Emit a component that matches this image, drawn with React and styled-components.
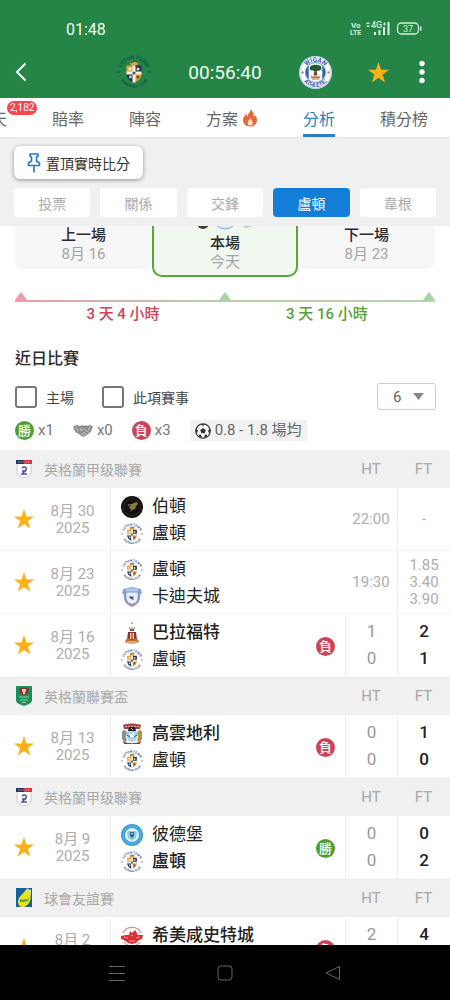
import React, { useId } from 'react';
import styled, { createGlobalStyle } from 'styled-components';

const GlobalStyle = createGlobalStyle`
    * {
        box-sizing: border-box;
    }

    body {
        margin: 0;
        background: #fff;
        color: #2b2b2b;
        font-family: Roboto, "Noto Sans CJK TC", sans-serif;
        font-size: 15px;
    }

    button, select {
        font: inherit;
        color: inherit;
        border: 0;
        padding: 0;
        background: none;
    }
`;

/* ---------- crests ---------- */

function LutonCrest({ size, dark }) {
    const id = useId();
    const ink = dark ? '#14504a' : '#3c4f7c';
    return (
        <svg width={size} height={size} viewBox="0 0 34 34" aria-hidden="true">
            <path id={id + 't'} d="M4.500 13 A13.2 13.2 0 0 1 29.500 13" fill="none"/>
            <path id={id + 'b'} d="M1.500 21 A16.2 16.2 0 0 0 32.500 21" fill="none"/>
            <text fontSize="5" fontWeight="700" fill={ink} textAnchor="middle">
                <textPath href={`#${id}t`} startOffset="50%">LUTON TOWN</textPath>
            </text>
            <text fontSize="4.2" fontWeight="700" fill={ink} textAnchor="middle">
                <textPath href={`#${id}b`} startOffset="50%">FOOTBALL CLUB</textPath>
            </text>
            <path d="M0 17h3M31 17h3" stroke={ink} strokeWidth="1"/>
            <path d="M13 8.500c2-3 6-3 8 0l-1 2h-6z" fill="#d9a441"/>
            <path d="M14 8l3-2 4 1" stroke={ink} strokeWidth="1" fill="none"/>
            <path d="M9.500 10.500h7.500v7.500h-7.500z" fill="#e3a33b"/>
            <path d="M17 10.500h7.500v7.500h-7.500z" fill="#26334f"/>
            <path d="M9.500 18h7.500v9.500c-4-1-7.500-4-7.500-9.500z" fill="#26334f"/>
            <path d="M17 18h7.500c0 5.500-3.500 8.500-7.500 9.500z" fill="#d99a3c"/>
            <path d="M15.500 10.500h3v17h-3zM9.500 16.500h15v3h-15z" fill="#f4f1e8"/>
            <circle cx="13" cy="14" r="1.500" fill="#fff"/>
            <circle cx="21" cy="14" r="1.500" fill="#e9d7a8"/>
            <circle cx="13.400" cy="22" r="1.400" fill="#c9ced9"/>
            <circle cx="20.800" cy="22" r="1.400" fill="#7b4a1c"/>
            <circle cx="17" cy="18" r="1.600" fill="#555"/>
        </svg>
    );
}

function WiganCrest({ size }) {
    const id = useId();
    return (
        <svg width={size} height={size} viewBox="0 0 34 34" aria-hidden="true">
            <path id={id + 't'} d="M6 15 A11.2 11.2 0 0 1 28 15" fill="none"/>
            <path id={id + 'b'} d="M1.800 20 A15.6 15.6 0 0 0 32.200 20" fill="none"/>
            <circle cx="17" cy="17" r="17" fill="#f7f9fc"/>
            <circle cx="17" cy="17" r="16.400" fill="none" stroke="#7fa6d6" strokeWidth=".6"/>
            <circle cx="17" cy="17" r="10.300" fill="#fff" stroke="#3a6fc0" strokeWidth=".8"/>
            <path d="M10 9.800a10 10 0 0 0 0 14.400zM24 9.800a10 10 0 0 1 0 14.400z" fill="#2a61b8"/>
            <text fontSize="6.600" fontWeight="700" fill="#3561b4" textAnchor="middle">
                <textPath href={`#${id}t`} startOffset="50%">WIGAN</textPath>
            </text>
            <text fontSize="6" fontWeight="700" fill="#3561b4" textAnchor="middle">
                <textPath href={`#${id}b`} startOffset="50%">ATHLETIC</textPath>
            </text>
            <path d="M11 13c0-3 3-4 6-4s7 1 6 4c0 2-3 2.500-6 2.500S11 15 11 13z" fill="#1f5b3a"/>
            <path d="M16 14h2l1 6h-4z" fill="#6b4a2c"/>
            <path d="M12 19l2 2 3-1 3 1 2-2v4l-2 2h-6l-2-2z" fill="#e0b48a"/>
            <path d="M13 22h8" stroke="#9c5b3a" strokeWidth="1"/>
            <circle cx="3.500" cy="17" r="1.300" fill="#c08a5a"/>
            <circle cx="30.500" cy="17" r="1.300" fill="#c08a5a"/>
        </svg>
    );
}

function BurtonCrest() {
    return (
        <svg width="22" height="22" viewBox="0 0 22 22" aria-hidden="true">
            <circle cx="11" cy="11" r="11" fill="#141210"/>
            <circle cx="11" cy="11" r="8.500" fill="none" stroke="#4b422c" strokeWidth=".8" strokeDasharray="1.500 1"/>
            <path d="M16 6l-3 1-2 1-3 0 2 2-2 2 2 1-1 3 2-2 3-1 1-3 2-2z" fill="#8f7a45"/>
            <path d="M7 8l2 3" stroke="#b59d5e" strokeWidth=".8"/>
        </svg>
    );
}

function CardiffCrest() {
    return (
        <svg width="22" height="22" viewBox="0 0 22 22" aria-hidden="true">
            <path d="M2 3l4-1 5-1 5 1 4 1 1 4-2 2c1 5-2 10-8 12C5 19 2 14 3 9L1 7z" fill="#8ea4d6"/>
            <path d="M5 6h12c1 6 0 11-6 13.500C5 17 4 12 5 6z" fill="#e9effb" stroke="#5a76bd" strokeWidth=".8"/>
            <path d="M5 2.500h12v3H5z" fill="#b7c6ea"/>
            <path d="M8 11l2-1 1 1 2-1-1 2 1 2-3-1z" fill="#31549c"/>
            <path d="M8 17l3 2 3-2" stroke="#d8728c" strokeWidth="1.200" fill="none"/>
        </svg>
    );
}

function BradfordCrest() {
    return (
        <svg width="22" height="22" viewBox="0 0 22 22" aria-hidden="true">
            <path d="M11 0l1 1.500-1 1-1-1z" fill="#6fa35a"/>
            <path d="M8 4l2 4 1-2 1 2 2-4-1 5H9z" fill="#4e4a48"/>
            <path d="M10 5h2v2h-2z" fill="#eab04e"/>
            <path d="M7 10h8l1 8H6z" fill="#8e2f2a"/>
            <path d="M9 11h4v6H9z" fill="#e8c6a0"/>
            <path d="M10.500 11h1v6h-1z" fill="#8e2f2a"/>
            <path d="M5 18c1-2 3-2 4-1l2 1 2-1c1-1 3-1 4 1l1 2c-4 2-10 2-14 0z" fill="#c4692f"/>
            <path d="M6 20h10" stroke="#f5e4cf" strokeWidth="1"/>
        </svg>
    );
}

function CoventryCrest() {
    return (
        <svg width="22" height="22" viewBox="0 0 22 22" aria-hidden="true">
            <path d="M2 2c5-2 13-2 18 0l-1 4H3z" fill="#a14848"/>
            <path d="M4 3.500h14" stroke="#d9a9a9" strokeWidth="1" strokeDasharray="2 1"/>
            <path d="M8 4h6l1 4H7z" fill="#222"/>
            <path d="M10 5l2 2" stroke="#e8c04e" strokeWidth="1"/>
            <path d="M6 8h10v6c0 3-2 4-5 5-3-1-5-2-5-5z" fill="#a9d4ef"/>
            <path d="M9 10h4v4H9z" fill="#fff"/>
            <path d="M1 8l3-1 2 3-1 4 1 4-3 1-2-3z" fill="#8b8f95"/>
            <path d="M21 8l-3-1-2 3 1 4-1 4 3 1 2-3z" fill="#b8913f"/>
            <path d="M2 18c5 3 13 3 18 0l-1 3H3z" fill="#9b3b3b"/>
            <path d="M6 12l3 2M16 12l-3 2" stroke="#33527f" strokeWidth="1"/>
        </svg>
    );
}

function PeterboroughCrest() {
    return (
        <svg width="22" height="22" viewBox="0 0 22 22" aria-hidden="true">
            <circle cx="11" cy="11" r="11" fill="#3a9fd0"/>
            <circle cx="11" cy="11" r="8.800" fill="none" stroke="#8fcbe6" strokeWidth="1" strokeDasharray="1.500 1"/>
            <circle cx="11" cy="11" r="7" fill="#e6f5fb"/>
            <path d="M7 7h8l1 2-1 5-4 3-4-3-1-5z" fill="#8fcde8"/>
            <path d="M9 8h4v4l-2 2-2-2z" fill="#276c9c"/>
            <path d="M10 9.500h2" stroke="#fff" strokeWidth=".8"/>
        </svg>
    );
}

function HemelCrest() {
    return (
        <svg width="22" height="22" viewBox="0 0 22 22" aria-hidden="true">
            <path d="M2 8a10 10 0 0 1 18 0" fill="none" stroke="#e58b8d" strokeWidth="1.200"/>
            <path d="M0 11l5-1 3 0 1-4 2 2 3-3 2 3 0 2 6 0-1 4-3 1-3 3-4 1-4-1-4-3-3-1z" fill="#dc2f35"/>
            <path d="M3 12l4 1M15 13l4-1M10 10l2 1M8 16h6" stroke="#f7b9ba" strokeWidth=".8"/>
            <path d="M3 17a10 10 0 0 0 16 0" fill="none" stroke="#e58b8d" strokeWidth="1.200"/>
        </svg>
    );
}

const crests = {
    luton: () => <LutonCrest size={22}/>,
    burton: BurtonCrest,
    cardiff: CardiffCrest,
    bradford: BradfordCrest,
    coventry: CoventryCrest,
    peterborough: PeterboroughCrest,
    hemel: HemelCrest,
};

function LeagueIcon({ kind }) {
    if (kind === 'cup') {
        return (
            <svg width="18" height="20" viewBox="0 0 18 20" aria-hidden="true">
                <path d="M1 0h16v14c0 3-3 4-8 6-5-2-8-3-8-6z" fill="#1c9058"/>
                <path d="M4 3c3-2 7-2 10 0l-1 4-3 2H8L5 7z" fill="#8d2f2a"/>
                <path d="M7 3h4l-1 5H8z" fill="#f0d2c8"/>
                <path d="M4 11h10M5 14h8M7 16.500h4" stroke="#8fd0b0" strokeWidth="1"/>
            </svg>
        );
    }
    if (kind === 'friendly') {
        return (
            <svg width="18" height="20" viewBox="0 0 18 20" aria-hidden="true">
                <path d="M1 0h16v19H1z" fill="#1a5f9e"/>
                <path d="M12 0c4 3 6 14-1 18-4 3-8 0-8-4 0-6 6-8 9-14z" fill="#e6e31a"/>
                <path d="M5 11c3 1 6 1 9-1l-1 3c-3 1-5 1-8 1z" fill="#57a04e"/>
                <path d="M13 1l3 1v6z" fill="#cfe0ea"/>
            </svg>
        );
    }
    return (
        <svg width="18" height="20" viewBox="0 0 18 20" aria-hidden="true">
            <path d="M2 4h14v9c0 3-3 5-7 6-4-1-7-3-7-6z" fill="#fff" stroke="#c7c9dc" strokeWidth="1"/>
            <path d="M1 1h8v4H1z" fill="#27345f"/>
            <path d="M9 1h8v4H9z" fill="#d8323f"/>
            <path d="M3 3h12" stroke="#d5d2dd" strokeWidth=".7" strokeDasharray="1.500 1"/>
            <path d="M7 9c2-2 5-1 4 2l-4 4h5M7 12h4" stroke="#4a4e9c" strokeWidth="1.500" fill="none"/>
        </svg>
    );
}

/* ---------- small icons ---------- */

function Star({ size }) {
    return (
        <svg width={size} height={size} viewBox="0 0 24 24" aria-hidden="true">
            <path d="M12 1.200l2.700 8h8.300l-6.700 5 2.500 8.200L12 17.400l-6.800 5 2.500-8.200-6.700-5h8.300z" fill="#fdb017"/>
        </svg>
    );
}

function Flame() {
    return (
        <svg width="16" height="18" viewBox="0 0 16 18" aria-hidden="true">
            <path d="M8.500 0c.8 3-3 4.500-2.600 7.500C4.700 7 4.500 6 4.600 4.800 2.500 6.500 1 8.800 1 11.300 1 15 4 17.500 8 17.500s7-2.500 7-6.200c0-2.300-1-4-2.300-5.600 0 1-.3 1.800-1 2.300C12 5 10.800 2 8.500 0z" fill="#e8663c"/>
            <path d="M8.300 8.500c.3 2-2.500 2.900-2.500 5.400 0 1.600 1 2.600 2.400 2.600s2.500-1 2.500-2.600c0-2.100-1.500-3.300-2.400-5.400z" fill="#fbe0cf"/>
        </svg>
    );
}

function Pin() {
    return (
        <svg width="14" height="20" viewBox="0 0 14 20" fill="none" stroke="#2479c4" strokeWidth="1.600" strokeLinejoin="round" strokeLinecap="round" aria-hidden="true">
            <path d="M3 1h8v2l-1.500 1v4l3 2v2.500h-11V10l3-2V4L3 3zM7 12.500V19"/>
        </svg>
    );
}

function Handshake() {
    return (
        <svg width="20" height="14" viewBox="0 0 20 14" aria-hidden="true">
            <path d="M0 2.500L4 .8l2 1.200 3-.7 2 .4 2-.5 2 .8L16.500.8 20 2.500l-2.500 6-1.500.5c-.3 1.300-1.200 1.600-2 1.500-.4 1.200-1.300 1.600-2.200 1.300-.7 1.200-1.700 1.500-2.600.8L4 8.800 2.500 8.500z" fill="#8c8c8c"/>
            <path d="M8.500 3.500L7 6c1.500.8 2.800.2 3.800-1.200L16 8.600M10 8.300l3.400 2.300M8 9.500l3 2M3 2.500l2 5M17 2.500l-1.500 4" stroke="#e2e2e2" strokeWidth=".7" fill="none"/>
        </svg>
    );
}

function Ball() {
    return (
        <svg width="16" height="16" viewBox="0 0 16 16" aria-hidden="true">
            <circle cx="8" cy="8" r="7.200" fill="#fff" stroke="#333" strokeWidth="1.300"/>
            <path d="M8 5l2.800 2-1 3.300H6.200L5.200 7zM5.500 1.200h5L8 3zM.8 6l2.200 1.300L2 10.500.8 9zM15.200 6L13 7.300l1 3.200 1.200-1.500zM4 11.500h2L7 14.800l-3-1.300zM12 11.500h-2l-1 3.300 3-1.300z" fill="#333"/>
        </svg>
    );
}

function StatusIcons() {
    return (
        <svg width="72" height="16" viewBox="0 0 72 16" fill="#d5f0dc" aria-hidden="true">
            <text x="1" y="7" fontSize="8" fontWeight="700">Vo</text>
            <text x="0" y="14" fontSize="7" fontWeight="700">LTE</text>
            <path d="M16 3l2-2 2 2zM16 4.500l2 2 2-2z"/>
            <text x="21" y="7" fontSize="9" fontWeight="500">4G</text>
            <path d="M33 3h3M34.500 1.500v3" stroke="#d5f0dc" strokeWidth="1"/>
            <path d="M24 11h2v3h-2zM28.500 9h2v5h-2zM33 6h2v8h-2zM37.500 1h2v13h-2z"/>
            <rect x="47.500" y="2" width="21" height="11" rx="4" fill="none" stroke="#d5f0dc" strokeWidth="1.300"/>
            <path d="M70 5.500h1.500v4H70z"/>
            <text x="58" y="11" fontSize="9" textAnchor="middle">37</text>
        </svg>
    );
}

/* ---------- layout ---------- */

const Screen = styled.div`
    display: flex;
    flex-direction: column;
    height: 100vh;
    overflow: hidden;
`;

const Header = styled.header`
    background: #248546;
    color: #f2fbf4;
`;

const StatusBar = styled.div`
    display: flex;
    align-items: center;
    justify-content: space-between;
    height: 46px;
    padding: 12px 28px 0 66px;
    font-size: 16px;
`;

const TitleBar = styled.div`
    display: grid;
    grid-template-columns: 1fr auto 1fr;
    align-items: center;
    gap: 37px;
    height: 52px;
    padding: 0 14px;
`;

const TitleSide = styled.div`
    display: flex;
    align-items: center;
    justify-content: space-between;
`;

const TitleActions = styled.div`
    display: flex;
    align-items: center;
    gap: 18px;
`;

const Clock = styled.h1`
    margin: 0;
    font-size: 19px;
    font-weight: 400;
`;

const IconButton = styled.button`
    display: flex;
    justify-content: center;
    min-width: ${props => props.$width || 0}px;
`;

const Tabs = styled.nav`
    display: flex;
    flex-shrink: 0;
    justify-content: flex-end;
    gap: 45px;
    height: 40px;
    padding: 0 22px;
    overflow: hidden;
    border-bottom: 1px solid #e4e4e4;
`;

const Tab = styled.a`
    position: relative;
    display: flex;
    flex-shrink: 0;
    align-items: center;
    gap: 4px;
    font-size: 16px;
    text-decoration: none;
    color: ${props => props.$active ? '#2d7ec4' : '#666'};
    border-top: 3px solid transparent;
    border-bottom: 3px solid ${props => props.$active ? '#2d7ec4' : 'transparent'};
`;

const TabCount = styled.span`
    position: absolute;
    top: 0;
    left: 100%;
    padding: 0 3px;
    border-radius: 7px;
    background: #f5474d;
    color: #fff;
    font-size: 10px;
    line-height: 14px;
`;

const Toolbar = styled.div`
    flex-shrink: 0;
    padding: 8px 14px 9px;
    background: #f0f0f0;
`;

const PinButton = styled.button`
    display: flex;
    align-items: center;
    gap: 5px;
    height: 33px;
    padding: 0 13px;
    border-radius: 6px;
    background: #fff;
    box-shadow: 0 1px 4px rgba(0, 0, 0, 0.4);
    font-size: 14px;
    color: #333;
`;

const Filters = styled.div`
    display: grid;
    grid-template-columns: repeat(5, 1fr);
    gap: 10px;
    margin-top: 9px;
`;

const Filter = styled.button`
    height: 29px;
    border-radius: 4px;
    font-size: 14px;
    background: ${props => props.$active ? '#127ed8' : '#fff'};
    color: ${props => props.$active ? '#fff' : '#aaa'};
`;

const Content = styled.main`
    flex: 1;
    min-height: 0;
    overflow-y: auto;
    scrollbar-width: none;
`;

const Fixtures = styled.section`
    display: grid;
    grid-template-columns: 1fr 146px 1fr;
    grid-template-rows: 51px;
    align-items: end;
    margin: 0 15px;
    overflow: hidden;
`;

const Fixture = styled.div`
    display: flex;
    flex-direction: column;
    align-items: center;
    padding: ${props => props.$current ? '10px 0 3px' : '10px 0 5px'};
    margin-bottom: ${props => props.$current ? 0 : '8px'};
    border: ${props => props.$current ? '2px solid #56a83a' : '0'};
    border-radius: ${props => props.$current ? '10px' : '8px'};
    background: ${props => props.$current ? '#eff7ee' : '#f6f6f6'};
    line-height: 19px;
    color: #a4a4a4;

    strong {
        font-weight: 500;
        color: #2b2b2b;
    }
`;

const FixtureTeams = styled.span`
    display: flex;
    margin-bottom: 4px;
`;

const Timeline = styled.section`
    margin: 15px 15px 0;
`;

const Track = styled.div`
    display: flex;
    justify-content: space-between;
    border-bottom: 2px solid;
    border-image: linear-gradient(to right, #ee9aa9, #b3d3a5 50%, #b3d9a9) 1;
`;

const Marker = styled.span`
    border: 6px solid transparent;
    border-top: 0;
    border-bottom: 8px solid ${props => props.$color};
`;

const Spans = styled.div`
    display: grid;
    grid-template-columns: 1fr 1fr;
    margin: 0 6px;
    text-align: center;
    font-size: 15px;
    font-weight: 500;
    line-height: 24px;
`;

const Span = styled.span`
    color: ${props => props.$color};
`;

const SectionTitle = styled.h2`
    margin: 21px 15px 0;
    font-size: 16px;
    font-weight: 500;
    line-height: 24px;
`;

const Options = styled.div`
    display: flex;
    align-items: center;
    gap: 28px;
    margin: 12px 14px 0 15px;
`;

const Option = styled.label`
    display: flex;
    align-items: center;
    gap: 9px;
    font-size: 14px;
    color: #444;
`;

const CheckBox = styled.input`
    appearance: none;
    width: 22px;
    height: 22px;
    margin: 0;
    border: 2px solid #777;
    border-radius: 3px;

    &:checked {
        background: #777;
    }
`;

const CountPicker = styled.label`
    display: grid;
    align-items: center;
    margin-left: auto;

    select, svg {
        grid-area: 1 / 1;
    }

    select {
        appearance: none;
        width: 59px;
        height: 27px;
        padding-left: 15px;
        border: 1px solid #ccc;
        border-radius: 3px;
        color: #666;
    }

    svg {
        justify-self: end;
        margin-right: 12px;
        pointer-events: none;
    }
`;

const Summary = styled.div`
    display: flex;
    align-items: center;
    gap: 19px;
    margin: 10px 15px 9px;
    line-height: 21px;
    color: #777;
`;

const Tally = styled.span`
    display: flex;
    align-items: center;
    gap: 4px;
`;

const Average = styled(Tally)`
    padding: 0 5px;
    background: #f2f2f2;
    color: #666;
`;

const ResultBadge = styled.span`
    display: inline-flex;
    align-items: center;
    justify-content: center;
    width: 19px;
    height: 19px;
    border-radius: 50%;
    background: ${props => props.$win ? '#4d9f33' : '#cd4256'};
    color: #fff;
    font-size: 13px;
    font-weight: 500;
    line-height: 19px;
`;

const Matches = styled.table`
    width: 100%;
    table-layout: fixed;
    border-collapse: separate;
    border-spacing: 0;
`;

const LeagueRow = styled.tr`
    height: 38px;
    background: #f0f0f0;
    color: #a8a8a8;

    th {
        padding: 0;
        font-weight: 400;
    }
`;

const LeagueName = styled.span`
    display: flex;
    align-items: center;
    gap: 11px;
    padding-left: 15px;
    font-size: 14px;
`;

const MatchRow = styled.tr`
    height: 63px;
`;

const Cell = styled.td`
    padding: 0;
    text-align: center;
    line-height: 17px;
    color: #adadad;
    border-bottom: 1px solid #f5f5f5;
    border-left: ${props => props.$line ? '1px solid #eee' : '0'};
`;

const DateCell = styled(Cell)`
    padding: 2px 13px 0 0;
`;

const Teams = styled.div`
    display: grid;
    grid-template-columns: 1fr auto;
    align-items: center;
    padding: 2px 10px 0;
`;

const Team = styled.span`
    display: flex;
    align-items: center;
    gap: 9px;
    height: 27px;
    font-size: 17px;
    line-height: 27px;
    color: #222;
    font-weight: ${props => props.$winner ? 500 : 400};
`;

const Score = styled.span`
    display: block;
    font-size: 17px;
    line-height: 27px;
    color: ${props => props.$full ? '#222' : '#999'};
    font-weight: ${props => props.$full ? 500 : 400};
`;

const SystemNav = styled.footer`
    display: grid;
    grid-template-columns: repeat(3, 1fr);
    flex-shrink: 0;
    align-items: center;
    height: 55px;
    padding: 0 14%;
    background: #000;
`;

/* ---------- data ---------- */

const groups = [
    {
        league: '英格蘭甲级聯賽', kind: 'league', matches: [
            { date: '8月 30', home: ['burton', '伯頓'], away: ['luton', '盧頓'], time: '22:00', odds: ['-'] },
            { date: '8月 23', home: ['luton', '盧頓'], away: ['cardiff', '卡迪夫城'], time: '19:30', odds: ['1.85', '3.40', '3.90'] },
            { date: '8月 16', home: ['bradford', '巴拉福特'], away: ['luton', '盧頓'], ht: [1, 0], ft: [2, 1] },
        ]
    },
    {
        league: '英格蘭聯賽盃', kind: 'cup', matches: [
            { date: '8月 13', home: ['coventry', '高雲地利'], away: ['luton', '盧頓'], ht: [0, 0], ft: [1, 0] },
        ]
    },
    {
        league: '英格蘭甲级聯賽', kind: 'league', matches: [
            { date: '8月 9', home: ['peterborough', '彼德堡'], away: ['luton', '盧頓'], ht: [0, 0], ft: [0, 2] },
        ]
    },
    {
        league: '球會友誼賽', kind: 'friendly', matches: [
            { date: '8月 2', home: ['hemel', '希美咸史特城'], away: ['luton', '盧頓'], ht: [2, 0], ft: [4, 0] },
        ]
    },
];

function Result({ win }) {
    return <ResultBadge $win={win}>{win ? '勝' : '負'}</ResultBadge>;
}

function Match({ match }) {
    const { date, home, away, time, odds, ht, ft } = match;
    const HomeCrest = crests[home[0]];
    const AwayCrest = crests[away[0]];
    const homeWon = ft != null && ft[0] > ft[1];
    const awayWon = ft != null && ft[1] > ft[0];
    const lutonWon = home[0] === 'luton' ? homeWon : awayWon;

    return (
        <MatchRow>
            <Cell><IconButton $width={48} aria-label="收藏"><Star size={22}/></IconButton></Cell>
            <DateCell>{date}<br/>2025</DateCell>
            <Cell $line>
                <Teams>
                    <div>
                        <Team $winner={homeWon}><HomeCrest/>{home[1]}</Team>
                        <Team $winner={awayWon}><AwayCrest/>{away[1]}</Team>
                    </div>
                    {ft && <Result win={lutonWon}/>}
                </Teams>
            </Cell>
            <Cell $line={ht != null}>
                {ht ? ht.map((n, i) => <Score key={i}>{n}</Score>) : time}
            </Cell>
            <Cell $line>
                {ft
                    ? ft.map((n, i) => <Score key={i} $full>{n}</Score>)
                    : odds.map(n => <div key={n}>{n}</div>)}
            </Cell>
        </MatchRow>
    );
}

function MatchTable() {
    return (
        <Matches>
            <colgroup>
                <col width="48"/>
                <col width="62"/>
                <col/>
                <col width="52"/>
                <col width="53"/>
            </colgroup>
            {groups.map((group, i) => (
                <tbody key={i}>
                    <LeagueRow>
                        <th colSpan={3} scope="rowgroup">
                            <LeagueName><LeagueIcon kind={group.kind}/>{group.league}</LeagueName>
                        </th>
                        <th scope="col">HT</th>
                        <th scope="col">FT</th>
                    </LeagueRow>
                    {group.matches.map(match => <Match key={match.date} match={match}/>)}
                </tbody>
            ))}
        </Matches>
    );
}

export default function App() {
    return (
        <Screen>
            <GlobalStyle/>
            <Header>
                <StatusBar>
                    <span>01:48</span>
                    <StatusIcons/>
                </StatusBar>
                <TitleBar>
                    <TitleSide>
                        <IconButton aria-label="返回">
                            <svg width="14" height="22" viewBox="0 0 14 22" fill="none" stroke="#fff" strokeWidth="2">
                                <path d="M11.500 2.500L3 11l8.500 8.500"/>
                            </svg>
                        </IconButton>
                        <LutonCrest size={34} dark/>
                    </TitleSide>
                    <Clock>00:56:40</Clock>
                    <TitleSide>
                        <WiganCrest size={33}/>
                        <TitleActions>
                            <IconButton aria-label="收藏"><Star size={23}/></IconButton>
                            <IconButton $width={28} aria-label="更多">
                                <svg width="6" height="24" viewBox="0 0 6 24" fill="#fff">
                                    <circle cx="3" cy="3.500" r="2.700"/>
                                    <circle cx="3" cy="12" r="2.700"/>
                                    <circle cx="3" cy="20.500" r="2.700"/>
                                </svg>
                            </IconButton>
                        </TitleActions>
                    </TitleSide>
                </TitleBar>
            </Header>

            <Tabs>
                <Tab href="#chat">聊天<TabCount>2,182</TabCount></Tab>
                <Tab href="#odds">賠率</Tab>
                <Tab href="#lineup">陣容</Tab>
                <Tab href="#tips">方案<Flame/></Tab>
                <Tab href="#analysis" $active>分析</Tab>
                <Tab href="#table">積分榜</Tab>
            </Tabs>

            <Toolbar>
                <PinButton><Pin/>置頂實時比分</PinButton>
                <Filters>
                    <Filter>投票</Filter>
                    <Filter>關係</Filter>
                    <Filter>交鋒</Filter>
                    <Filter $active>盧頓</Filter>
                    <Filter>韋根</Filter>
                </Filters>
            </Toolbar>

            <Content>
                <Fixtures>
                    <Fixture><strong>上一場</strong>8月 16</Fixture>
                    <Fixture $current>
                        <FixtureTeams>
                            <svg width="54" height="20" viewBox="0 0 54 20" aria-hidden="true">
                                <circle cx="5" cy="13" r="6" fill="#3d3f45"/>
                                <circle cx="27" cy="7" r="12" fill="#dcebf8" stroke="#7fa6d6"/>
                                <circle cx="49" cy="13" r="5" fill="#c5cbc5"/>
                            </svg>
                        </FixtureTeams>
                        <strong>本場</strong>今天
                    </Fixture>
                    <Fixture><strong>下一場</strong>8月 23</Fixture>
                </Fixtures>

                <Timeline>
                    <Track>
                        <Marker $color="#ee9aa9"/>
                        <Marker $color="#a9d3a0"/>
                        <Marker $color="#a9d3a0"/>
                    </Track>
                    <Spans>
                        <Span $color="#cf4257">3 天 4 小時</Span>
                        <Span $color="#55a03c">3 天 16 小時</Span>
                    </Spans>
                </Timeline>

                <SectionTitle>近日比賽</SectionTitle>
                <Options>
                    <Option><CheckBox type="checkbox"/>主場</Option>
                    <Option><CheckBox type="checkbox"/>此項賽事</Option>
                    <CountPicker>
                        <select aria-label="場數" defaultValue="6">
                            <option>6</option>
                            <option>10</option>
                            <option>20</option>
                        </select>
                        <svg width="11" height="7" viewBox="0 0 11 7" aria-hidden="true">
                            <path d="M0 0h11L5.500 7z" fill="#888"/>
                        </svg>
                    </CountPicker>
                </Options>
                <Summary>
                    <Tally><Result win/>x1</Tally>
                    <Tally><Handshake/>x0</Tally>
                    <Tally><Result/>x3</Tally>
                    <Average><Ball/>0.8 - 1.8 場均</Average>
                </Summary>

                <MatchTable/>
            </Content>

            <SystemNav>
                <IconButton aria-label="選單">
                    <svg width="16" height="16" viewBox="0 0 16 16" stroke="#666" strokeWidth="1">
                        <path d="M0 1.500h16M0 8.500h16M0 15.500h16"/>
                    </svg>
                </IconButton>
                <IconButton aria-label="主畫面">
                    <svg width="16" height="16" viewBox="0 0 16 16" fill="none" stroke="#666">
                        <rect x="1" y="1" width="14" height="14" rx="3"/>
                    </svg>
                </IconButton>
                <IconButton aria-label="返回">
                    <svg width="16" height="16" viewBox="0 0 16 16" fill="none" stroke="#666" strokeLinejoin="round">
                        <path d="M14.500 1.500v13L1 8z"/>
                    </svg>
                </IconButton>
            </SystemNav>
        </Screen>
    );
}
